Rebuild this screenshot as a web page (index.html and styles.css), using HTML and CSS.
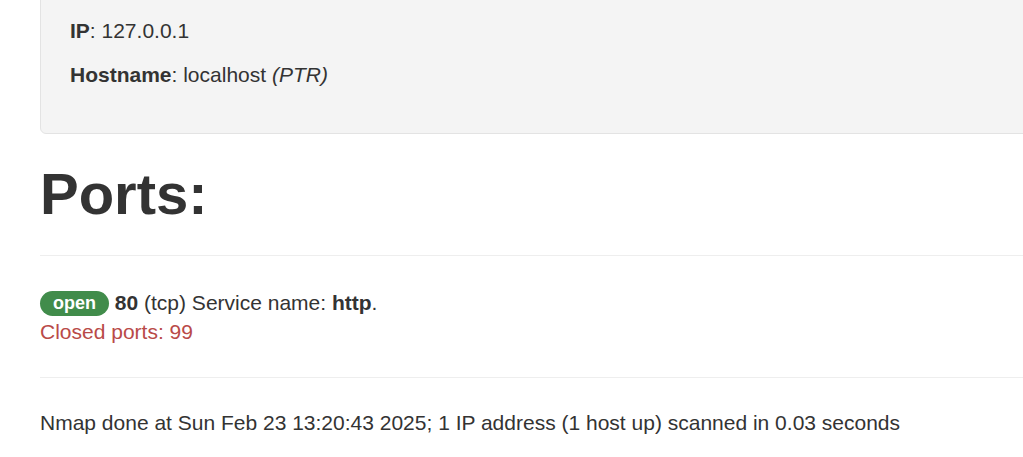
FILE: index.html
```html
<!DOCTYPE html>
<html>
<head>
<meta charset="utf-8">
<link rel="stylesheet" href="styles.css">
</head>
<body>
<div class="container">
  <div class="well">
    <p><b>IP</b>: 127.0.0.1</p>
    <p><b>Hostname</b>: localhost <i>(PTR)</i></p>
  </div>
  <h1 class="title">Ports:</h1>
  <hr class="rule rule-top">
  <div class="ports">
    <div class="port-line"><span class="label">open</span> <b>80</b> (tcp) Service name: <b>http</b>.</div>
    <div class="closed">Closed ports: 99</div>
  </div>
  <hr class="rule rule-bottom">
  <p class="summary">Nmap done at Sun Feb 23 13:20:43 2025; 1 IP address (1 host up) scanned in 0.03 seconds</p>
</div>
</body>
</html>
```
FILE: styles.css
```css
html, body {
  margin: 0;
  padding: 0;
  overflow: hidden;
  background: #fff;
}
body {
  font-family: "Liberation Sans", Arial, sans-serif;
  font-size: 21px;
  line-height: 29px;
  color: #333;
}
.container {
  width: 1100px;
  padding-left: 40px;
}
.well {
  margin-top: -16px;
  padding: 31px 29px 29px 29px;
  background: #f4f4f4;
  border: 1px solid #e3e3e3;
  border-radius: 6px;
}
.well p {
  margin: 0 0 15px 0;
}
.title {
  margin: 27px 0 0 0;
  font-size: 58px;
  line-height: 66px;
  font-weight: bold;
  color: #333;
}
.rule {
  border: 0;
  border-top: 1px solid #eee;
  margin: 0;
  height: 0;
}
.rule-top {
  margin-top: 28px;
}
.ports {
  margin-top: 32px;
}
.port-line {
  height: 29px;
}
.label {
  display: inline-block;
  background: #418c4b;
  color: #fff;
  font-weight: bold;
  font-size: 18px;
  line-height: 25px;
  height: 25px;
  padding: 0 13px;
  border-radius: 13px;
  vertical-align: 1px;
}
.closed {
  color: #b94a48;
}
.rule-bottom {
  margin-top: 31px;
}
.summary {
  margin: 30px 0 0 0;
}
```
